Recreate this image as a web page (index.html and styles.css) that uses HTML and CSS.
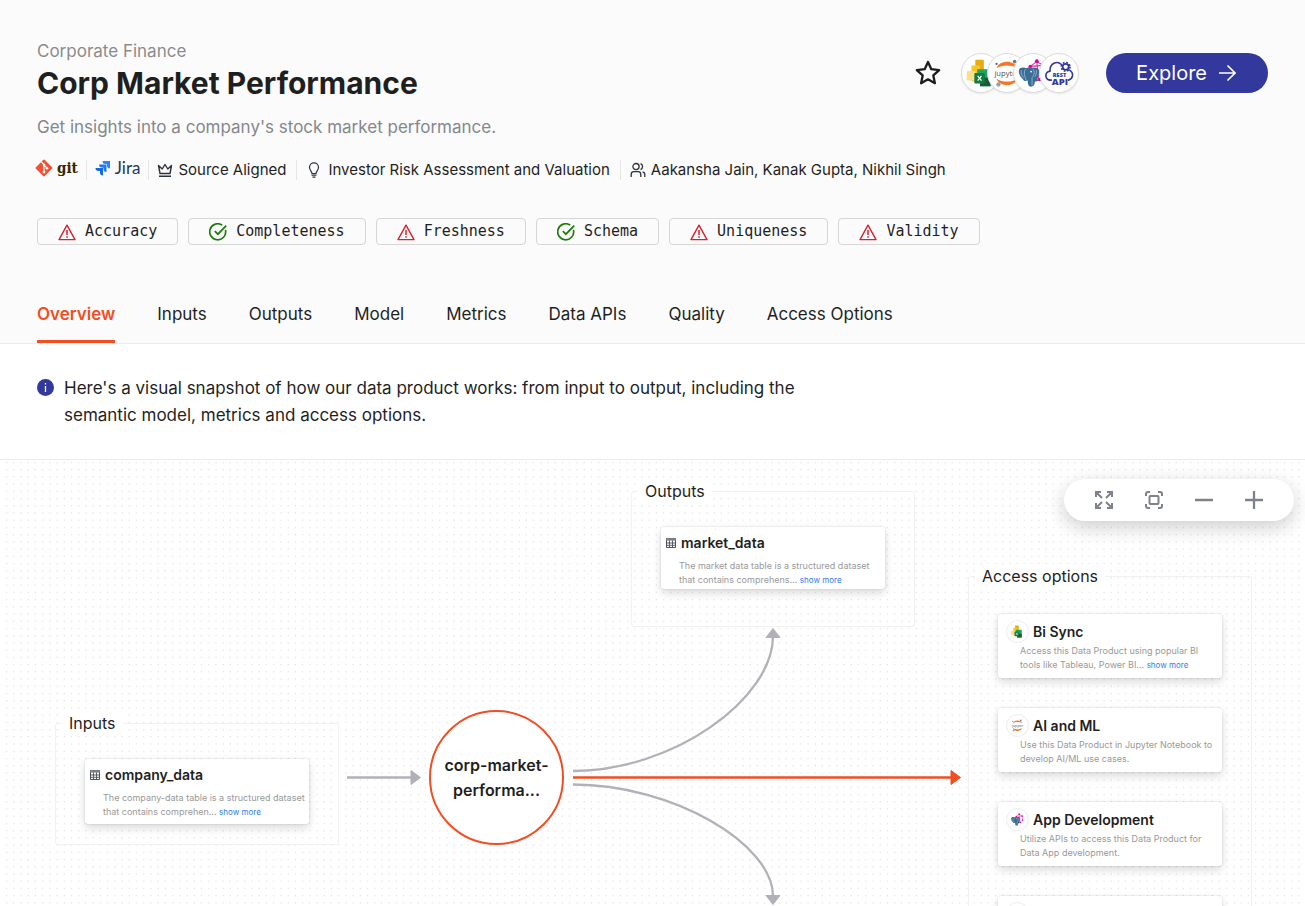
FILE: index.html
```html
<!DOCTYPE html>
<html lang="en">
<head>
<meta charset="utf-8">
<meta name="viewport" content="width=device-width, initial-scale=1">
<title>Corp Market Performance</title>
<link rel="stylesheet" href="styles.css">
</head>
<body>
<svg class="sprite" aria-hidden="true">
  <symbol id="warn" viewBox="0 0 18 18"><path d="M9 2.2 17 16.6H1Z" fill="none" stroke="#d9202f" stroke-width="1.4" stroke-linejoin="round"/><path d="M9 7v5M9 13.2v1.6" stroke="#d9202f" stroke-width="1.5"/></symbol>
  <symbol id="ok" viewBox="0 0 18 18"><path d="M16.6 7.6A8 8 0 1 1 12.6 1.8" fill="none" stroke="#1f7a0c" stroke-width="1.7" stroke-linecap="round"/><path d="m5.8 8.2 3.1 3L17.2 2.6" fill="none" stroke="#1f7a0c" stroke-width="1.7"/></symbol>
  <symbol id="table" viewBox="0 0 10 10"><path d="M.5.5h9v9h-9Z" fill="#fff" stroke="#4b4f56"/><path d="M0 0h10v2.6H0Z" fill="#7c8086"/><path d="M.5 5h9M.5 7.3h9M3.5 2.5v7M6.500 2.500v7" stroke="#4b4f56" stroke-width=".9"/></symbol>
  <symbol id="bi" viewBox="0 0 40 40">
    <rect x="14" y="6" width="9" height="20" rx="1" fill="#e8ad0c"/><rect x="10" y="12" width="9" height="17" rx="1" fill="#f6c827"/><rect x="5" y="18" width="9" height="10" rx="1" fill="#fbe08a"/>
    <path d="M16 16h14v18H19V28h-3Z" fill="#21a366"/><path d="M22 25h8v9H19v-6Z" fill="#185c37"/><rect x="13" y="20" width="11" height="11" rx="1" fill="#107c41"/><path d="m16.500 23 4 5m0-5-4 5" stroke="#fff" stroke-width="1.300"/>
  </symbol>
  <symbol id="jupyter" viewBox="0 0 40 40">
    <path d="M9 15C12 6 28 6 31 15 25 11 15 11 9 15Z" fill="#f37726"/><path d="M9 26c3 9 19 9 22 0-6 4-16 4-22 0Z" fill="#f37726"/>
    <text x="20" y="23" class="jupyter-word">jupyter</text>
    <circle cx="28" cy="8" r="1.900" fill="#767677"/><circle cx="9" cy="10.500" r="1.200" fill="#616262"/><circle cx="11" cy="32" r="2.300" fill="#9e9e9e"/>
  </symbol>
  <symbol id="app" viewBox="0 0 40 40">
    <path d="m17 13 7-5 7 4 1 9-6 6-9-14 14-1M24 8l2 19" fill="none" stroke="#e535ab" stroke-width="1.200"/>
    <g fill="#e10098"><circle cx="17" cy="13" r="1.700"/><circle cx="24" cy="7.500" r="2"/><circle cx="31" cy="12" r="1.900"/><circle cx="32" cy="21" r="1.800"/><circle cx="27" cy="27" r="1.800"/></g>
    <path d="M5 18c0-4 5-4.500 8-3 3-1.500 5-1 7-.5 3-1 6.500.5 6.500 4 0 3-1.500 6-2.500 8h2.500c-1 2-3 2.500-4.500 2.500 0 3-1.500 5.500-4 5.500-3 0-3.500-3-3.500-6.500-2 1-4.500.5-5-1.500C7 25 5 21 5 18Z" fill="#3a6d96"/>
    <path d="M12 16c-2 4-1 7 1 12M20 16c2.500 4 1 6-1 9v8M7.500 17c-.5 3 1 6 2.500 8M23.500 17c.5 3-.5 5-1.500 7" fill="none" stroke="#a9c3d8" stroke-width=".8"/><circle cx="18" cy="18.500" r=".9" fill="#fff"/>
  </symbol>
  <symbol id="rest" viewBox="0 0 40 40">
    <path d="M12 27.500C5 28 4 19 10.500 18 10 10 18 6.500 22.500 11M31 17c5 3 4 9-1 10.500" fill="none" stroke="#32389c" stroke-width="1.700" stroke-linecap="round"/>
    <circle cx="27" cy="13.500" r="3.200" fill="none" stroke="#32389c" stroke-width="1.900"/><circle cx="27" cy="13.500" r="4.600" fill="none" stroke="#32389c" stroke-width="1.800" stroke-dasharray="1.806 1.806"/>
    <text x="20.500" y="24.500" class="rest-word">REST</text><text x="21" y="33" class="api-word">API</text>
  </symbol>
</svg>

<header class="header">
  <div class="hero">
    <div class="intro">
      <p class="category">Corporate Finance</p>
      <h1 class="title">Corp Market Performance</h1>
      <p class="summary">Get insights into a company's stock market performance.</p>
    </div>
    <div class="actions">
      <button class="star" type="button" aria-label="Add to favourites"><svg width="26" height="26" viewBox="0 0 26 26"><path d="m13 2 3.300 7.200 7.900.9-5.900 5.300 1.600 7.800L13 19.300l-6.900 3.900 1.600-7.800-5.900-5.300 7.900-.9Z" fill="none" stroke="#1c1c1c" stroke-width="2.300" stroke-linejoin="round"/></svg></button>
      <div class="avatars">
        <span class="avatar"><svg><use href="#bi"/></svg></span>
        <span class="avatar"><svg><use href="#jupyter"/></svg></span>
        <span class="avatar"><svg><use href="#app"/></svg></span>
        <span class="avatar"><svg><use href="#rest"/></svg></span>
      </div>
      <button class="explore" type="button">Explore <svg width="18" height="18" viewBox="0 0 18 18"><path d="M1 9h16M9.500 1.500 17 9l-7.500 7.500" fill="none" stroke="#fff" stroke-width="1.600"/></svg></button>
    </div>
  </div>

  <ul class="meta">
    <li><a class="brand" href="#git"><svg width="18" height="18" viewBox="0 0 18 18"><rect x="2.700" y="2.700" width="12.600" height="12.600" rx="1.200" transform="rotate(45 9 9)" fill="#f05033"/><path d="M6.500 3 9 5.500V13M9 6l3 3" fill="none" stroke="#fff" stroke-width="1.100"/><g fill="#fff"><circle cx="9" cy="5.800" r="1.300"/><circle cx="9" cy="13" r="1.400"/><circle cx="12" cy="9.200" r="1.300"/></g></svg><span class="git-word">git</span></a></li>
    <li><a class="brand" href="#jira"><svg width="16" height="16" viewBox="0 0 16 16"><path d="M7.500 1H15v7.500c-2 0-3-1-3-3V4h-1.500c-2 0-3-1-3-3Z" fill="#2684ff"/><path d="M4 4.500h7.500V12c-2 0-3-1-3-3V7.500H7c-2 0-3-1-3-3Z" fill="#1f78f5"/><path d="M.5 8H8v7.500c-2 0-3-1-3-3V11H3.500c-2 0-3-1-3-3Z" fill="#1668e3"/></svg><span class="jira-word">Jira</span></a></li>
    <li><svg width="16" height="16" viewBox="0 0 16 16"><path d="m1.500 3.500 1.500 8h10l1.500-8L10.800 7 8 2.500 5.200 7ZM2 14.300h12" fill="none" stroke="#2d333d" stroke-width="1.400" stroke-linejoin="round"/></svg>Source Aligned</li>
    <li class="domain"><svg width="12" height="16" viewBox="0 0 12 16"><path d="M4 11.500C4 9.500 1.500 8.500 1.500 5.300a4.500 4.500 0 0 1 9 0c0 3.200-2.500 4.200-2.500 6.200ZM3.500 13.200h5M4.500 15.200h3" fill="none" stroke="#2d333d" stroke-width="1.200"/></svg>Investor Risk Assessment and Valuation</li>
    <li class="owners"><svg width="16" height="16" viewBox="0 0 16 16"><path d="M1.200 15v-2.500c0-2 1-2.800 2.800-2.800h4c1.800 0 2.800.8 2.800 2.800V15M12.500 9.800c1.500.3 2.300 1 2.300 2.700V15M10.500 1.600a3.200 3.200 0 0 1 0 6" fill="none" stroke="#2d333d" stroke-width="1.300"/><circle cx="6" cy="4.600" r="3.100" fill="none" stroke="#2d333d" stroke-width="1.300"/></svg>Aakansha Jain, Kanak Gupta, Nikhil Singh</li>
  </ul>

  <ul class="chips">
    <li><svg><use href="#warn"/></svg>Accuracy</li>
    <li><svg><use href="#ok"/></svg>Completeness</li>
    <li><svg><use href="#warn"/></svg>Freshness</li>
    <li><svg><use href="#ok"/></svg>Schema</li>
    <li><svg><use href="#warn"/></svg>Uniqueness</li>
    <li><svg><use href="#warn"/></svg>Validity</li>
  </ul>

  <nav class="tabs" aria-label="Sections">
    <a class="tab tab-active" href="#overview" aria-current="page">Overview</a>
    <a class="tab" href="#inputs">Inputs</a>
    <a class="tab" href="#outputs">Outputs</a>
    <a class="tab" href="#model">Model</a>
    <a class="tab" href="#metrics">Metrics</a>
    <a class="tab" href="#apis">Data APIs</a>
    <a class="tab" href="#quality">Quality</a>
    <a class="tab" href="#access">Access Options</a>
  </nav>
</header>

<section class="notice">
  <svg width="17" height="17" viewBox="0 0 17 17" aria-hidden="true"><circle cx="8.500" cy="8.500" r="8.500" fill="#32389c"/><path d="M8.500 7v6M8.500 4v1.500" stroke="#fff" stroke-width="1.300"/></svg>
  <p>Here's a visual snapshot of how our data product works: from input to output, including the semantic model, metrics and access options.</p>
</section>

<main class="canvas">
  <svg class="edges" aria-hidden="true">
    <defs><pattern id="dots" width="7.220" height="7.220" patternUnits="userSpaceOnUse"><circle cx="6.500" cy="2.500" r=".5" fill="#bcbcc4"/></pattern></defs>
    <rect width="100%" height="100%" fill="url(#dots)"/>
    <g fill="none" stroke="#b1b1b7" stroke-width="2.300">
      <path d="M347 317.500h66"/>
      <path d="M573 311C673 311 773 239 773 176"/>
      <path d="M573 324.500C673 324.500 773 384 773 436"/>
      <path d="M573 317.500h380" stroke="#f04e23"/>
    </g>
    <g fill="#b1b1b7" stroke="#b1b1b7" stroke-linejoin="round">
      <path d="M411 310.500v14l9.500-7Z"/><path d="M766 177.500h14l-7-9Z"/><path d="M766 435.500h14l-7 9Z"/>
      <path d="M951 310.500v14l9.500-7Z" fill="#f04e23" stroke="#f04e23"/>
    </g>
  </svg>

  <section class="group group-inputs">
    <h2 class="group-title">Inputs</h2>
    <article class="card">
      <h3 class="card-title"><svg class="table-icon"><use href="#table"/></svg>company_data</h3>
      <p class="card-text">The company-data table is a structured dataset that contains comprehen... <a href="#more-company">show more</a></p>
    </article>
  </section>

  <section class="group group-outputs">
    <h2 class="group-title">Outputs</h2>
    <article class="card">
      <h3 class="card-title"><svg class="table-icon"><use href="#table"/></svg>market_data</h3>
      <p class="card-text">The market data table is a structured dataset that contains comprehens... <a href="#more-market">show more</a></p>
    </article>
  </section>

  <section class="group group-access">
    <h2 class="group-title">Access options</h2>
    <article class="card option">
      <h3 class="card-title"><span class="badge"><svg><use href="#bi"/></svg></span>Bi Sync</h3>
      <p class="card-text">Access this Data Product using popular BI tools like Tableau, Power BI... <a href="#more-bi">show more</a></p>
    </article>
    <article class="card option">
      <h3 class="card-title"><span class="badge"><svg><use href="#jupyter"/></svg></span>AI and ML</h3>
      <p class="card-text">Use this Data Product in Jupyter Notebook to develop AI/ML use cases.</p>
    </article>
    <article class="card option">
      <h3 class="card-title"><span class="badge"><svg><use href="#app"/></svg></span>App Development</h3>
      <p class="card-text">Utilize APIs to access this Data Product for Data App development.</p>
    </article>
    <article class="card option">
      <h3 class="card-title"><span class="badge"></span></h3>
    </article>
  </section>

  <div class="product">corp-market-performa...</div>

  <div class="toolbar" role="toolbar" aria-label="Canvas controls">
    <button type="button" aria-label="Full screen"><svg viewBox="0 0 18 18"><path d="M1 6V1h5M12 1h5v5M17 12v5h-5M6 17H1v-5M1.500 1.500l5.500 5.500M16.500 1.500 11 7M16.500 16.500 11 11M1.500 16.500 7 11"/></svg></button>
    <button type="button" aria-label="Fit view"><svg viewBox="0 0 18 18"><path d="M1 5V3q0-2 2-2h2M13 1h2q2 0 2 2v2M17 13v2q0 2-2 2h-2M5 17H3q-2 0-2-2v-2"/><rect x="4.500" y="5" width="9" height="8" rx="1"/></svg></button>
    <button type="button" aria-label="Zoom out"><svg viewBox="0 0 18 18"><path d="M.5 9h17" class="bold"/></svg></button>
    <button type="button" aria-label="Zoom in"><svg viewBox="0 0 18 18"><path d="M.5 9h17M9 .5v17" class="bold"/></svg></button>
  </div>
</main>
</body>
</html>
```
FILE: styles.css
```css
* { box-sizing: border-box; }
body {
  margin: 0;
  min-height: 100vh;
  display: flex;
  flex-direction: column;
  background: #fff;
  color: #1f1f1f;
  font-family: Inter, "Liberation Sans", sans-serif;
  font-size: 17px;
  line-height: 27px;
}
h1, h2, h3, p, ul { margin: 0; padding: 0; }
ul { list-style: none; }
a { color: inherit; text-decoration: none; }
button { border: 0; padding: 0; background: none; font: inherit; cursor: pointer; }
svg { flex: none; display: block; }
.sprite { display: none; }

.header { padding: 38px 37px 0; background: #fbfbfb; border-bottom: 1px solid #ececec; }
.hero { display: flex; justify-content: space-between; }
.category { color: #8b8b8b; }
.title { font-size: 30px; line-height: 36px; font-weight: 700; }
.summary { margin-top: 13px; color: #85878d; }
.actions { display: flex; align-items: center; align-self: flex-start; margin-top: 15px; }
.avatars { display: flex; margin: 0 27px 0 20px; }
.avatar {
  width: 40px;
  height: 40px;
  overflow: hidden;
  border: 1px solid #dcdcdc;
  border-radius: 50%;
  background: #fff;
  box-shadow: 0 1px 2px rgba(0, 0, 0, .08);
}
.avatar + .avatar { margin-left: -14px; }
.avatar svg, .badge svg { width: 100%; height: 100%; }
.jupyter-word { font: 8px "Open Sans", sans-serif; text-anchor: middle; fill: #4e4e4e; }
.rest-word { font: 800 6px "Open Sans", sans-serif; text-anchor: middle; fill: #32389c; }
.api-word { font: 800 10px "Open Sans", sans-serif; text-anchor: middle; fill: #32389c; }
.explore {
  display: flex;
  align-items: center;
  gap: 11px;
  height: 40px;
  padding: 0 32px 0 30px;
  border-radius: 20px;
  background: #32389c;
  color: #fff;
  font-size: 20px;
}

.meta { display: flex; flex-wrap: wrap; margin-top: 17px; font-size: 15px; line-height: 24px; }
.meta li { display: flex; align-items: center; gap: 5px; }
.meta li + li { margin-left: 8px; padding-left: 9px; background: linear-gradient(#e6e6e6, #e6e6e6) 0 center / 1px 20px no-repeat; }
.meta li:first-child { margin-left: -2px; }
.meta .domain { gap: 8px; margin-left: 10px; padding-left: 12px; }
.meta .owners { margin-left: 10px; padding-left: 10px; }
.brand { display: flex; align-items: center; gap: 4px; padding-bottom: 4px; }
.git-word { font: 700 15px/20px "DejaVu Serif Condensed", "DejaVu Serif", serif; color: #362701; }
.jira-word { font: 17px/20px Lato, sans-serif; color: #253858; }

.chips { display: flex; flex-wrap: wrap; gap: 10px; margin-top: 36px; }
.chips li {
  display: flex;
  align-items: flex-start;
  gap: 9px;
  height: 27px;
  padding: 0 20px;
  border: 1px solid #d6d6d6;
  border-radius: 4px;
  font: 15px/24px "DejaVu Sans Mono", monospace;
}
.chips svg { width: 18px; height: 18px; margin-top: 4px; }

.tabs { display: flex; gap: 42px; margin-top: 56px; }
.tab { padding-bottom: 12px; border-bottom: 3px solid transparent; }
.tab-active { border-color: #f04e23; color: #f04e23; font-weight: 600; }

.notice { display: flex; gap: 10px; padding: 31px 37px 30px; border-bottom: 1px solid #ececec; }
.notice svg { margin-top: 4px; }
.notice p { max-width: 770px; }

.canvas { position: relative; flex: 1; min-height: 446px; overflow: hidden; }
.edges { position: absolute; inset: 0; width: 100%; height: 100%; }
.group {
  position: absolute;
  width: 284px;
  padding: 0 29px;
  border: 1px solid #f1f1f1;
  border-radius: 3px;
}
.group-inputs { left: 55px; top: 263px; height: 122px; }
.group-outputs { left: 631px; top: 31px; height: 136px; }
.group-access { left: 968px; top: 116px; }
.group-title {
  width: max-content;
  margin: -13px 0 24px -23px;
  padding: 0 7px;
  background: #fff;
  font-size: 16px;
  line-height: 24px;
  font-weight: 400;
}
.group-access .group-title { margin-bottom: 26px; }
.card {
  min-height: 65px;
  padding: 6px 2px 4px 5px;
  border-radius: 3px;
  background: #fff;
  box-shadow: 0 0 2px rgba(0, 0, 0, .15), 0 4px 10px rgba(0, 0, 0, .15);
}
.group-outputs .card { min-height: 62px; padding-bottom: 1px; }
.card-title { display: flex; align-items: center; gap: 5px; font-size: 14px; line-height: 20px; font-weight: 600; }
.table-icon { width: 10px; height: 10px; }
.card-text { margin: 6px 0 0 13px; color: #999; font-size: 9px; line-height: 14px; }
.card-text a { color: #2f7df6; font-size: 8px; }
.option { min-height: 64px; margin-bottom: 30px; padding: 6px 9px 6px 8px; }
.option .card-title { line-height: 23px; gap: 4px; }
.option .card-text { margin: 1px 0 0 14px; }
.badge { width: 23px; height: 23px; padding: 2px; border: 1px solid #ececec; border-radius: 50%; background: #fff; }
.product {
  position: absolute;
  left: 429px;
  top: 250px;
  width: 135px;
  height: 135px;
  display: flex;
  align-items: center;
  padding: 0 10px;
  border: 2px solid #f04e23;
  border-radius: 50%;
  background: #fff;
  text-align: center;
  font-size: 16px;
  line-height: 25px;
  font-weight: 600;
}
.toolbar {
  position: absolute;
  right: 11px;
  top: 19px;
  display: flex;
  gap: 32px;
  padding: 12px 31px;
  border-radius: 21px;
  background: #fff;
  box-shadow: 0 6px 20px rgba(0, 0, 0, .2);
}
.toolbar svg { width: 18px; height: 18px; fill: none; stroke: #7f828a; stroke-width: 2; }
.toolbar .bold { stroke-width: 2.3; stroke-linecap: round; }
```
